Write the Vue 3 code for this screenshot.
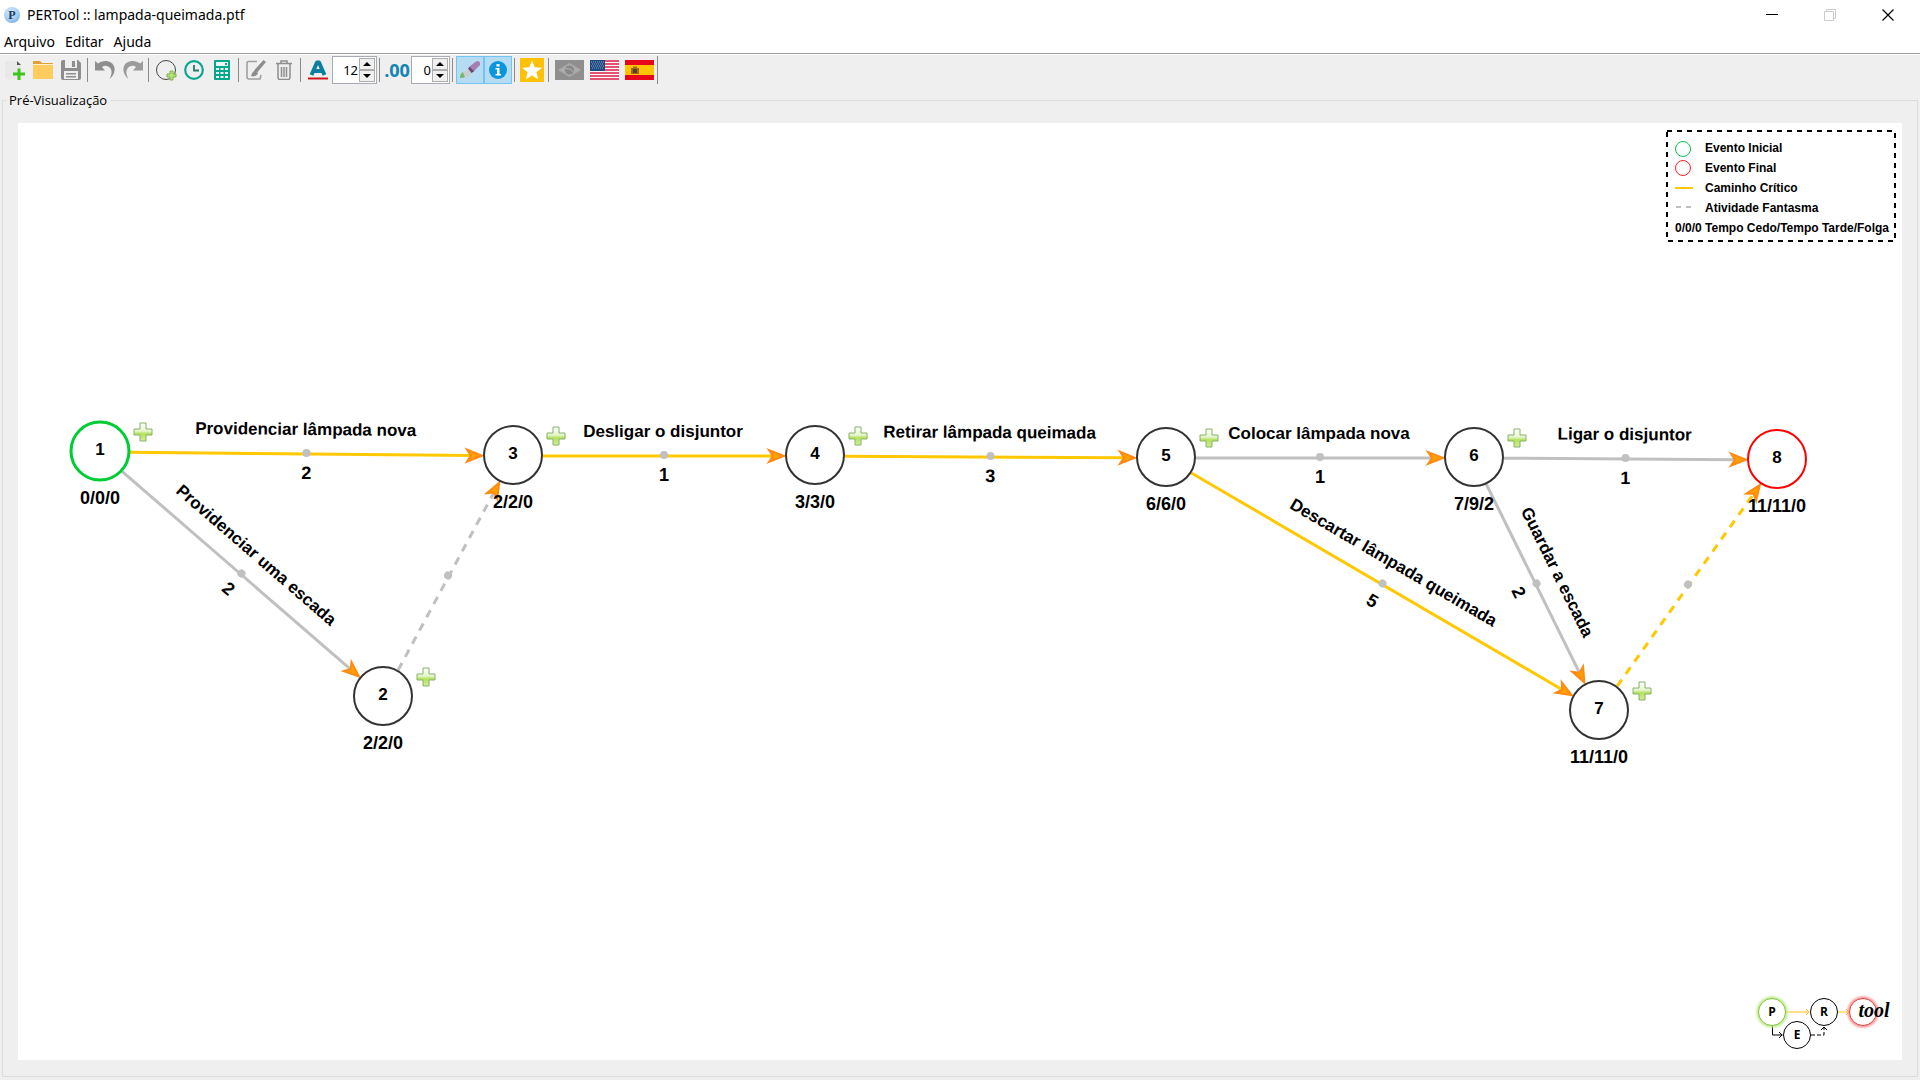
<script setup>
import { ref } from 'vue'

const fontSize = ref(12)
const decimals = ref(0)

const nodes = [
  { id: 1, x: 82, y: 328, time: '0/0/0', kind: 'start' },
  { id: 2, x: 365, y: 573, time: '2/2/0' },
  { id: 3, x: 495, y: 332, time: '2/2/0' },
  { id: 4, x: 797, y: 332, time: '3/3/0' },
  { id: 5, x: 1148, y: 334, time: '6/6/0' },
  { id: 6, x: 1456, y: 334, time: '7/9/2' },
  { id: 7, x: 1581, y: 587, time: '11/11/0' },
  { id: 8, x: 1759, y: 336, time: '11/11/0', kind: 'end' }
]

const activities = [
  { from: 1, to: 3, label: 'Providenciar lâmpada nova', duration: 2, critical: true },
  { from: 1, to: 2, label: 'Providenciar uma escada', duration: 2 },
  { from: 2, to: 3, ghost: true },
  { from: 3, to: 4, label: 'Desligar o disjuntor', duration: 1, critical: true },
  { from: 4, to: 5, label: 'Retirar lâmpada queimada', duration: 3, critical: true },
  { from: 5, to: 6, label: 'Colocar lâmpada nova', duration: 1 },
  { from: 5, to: 7, label: 'Descartar lâmpada queimada', duration: 5, critical: true },
  { from: 6, to: 7, label: 'Guardar a escada', duration: 2 },
  { from: 6, to: 8, label: 'Ligar o disjuntor', duration: 1 },
  { from: 7, to: 8, ghost: true, critical: true }
]

const RADIUS = 30

// Each edge is drawn along its own x axis, centred on the midpoint of its two nodes.
const edges = activities.map((a) => {
  const p = nodes.find((n) => n.id === a.from)
  const q = nodes.find((n) => n.id === a.to)
  const half = Math.hypot(q.x - p.x, q.y - p.y) / 2 - RADIUS
  const angle = (Math.atan2(q.y - p.y, q.x - p.x) * 180) / Math.PI
  return {
    ...a,
    key: `${a.from}-${a.to}`,
    half,
    frame: `translate(${(p.x + q.x) / 2} ${(p.y + q.y) / 2}) rotate(${angle})`
  }
})
</script>

<template>
  <div class="window">
    <header class="titlebar">
      <svg class="app-icon" viewBox="0 0 16 16" aria-hidden="true">
        <defs>
          <radialGradient id="ball" cx="0.4" cy="0.3" r="0.8">
            <stop offset="0" stop-color="#d4e9fa" />
            <stop offset="0.6" stop-color="#a5cdf0" />
            <stop offset="1" stop-color="#6fa8dc" />
          </radialGradient>
        </defs>
        <circle cx="8" cy="8" r="8" fill="url(#ball)" />
        <text x="8" y="12" class="app-letter">P</text>
      </svg>
      <h1 class="title">PERTool :: lampada-queimada.ptf</h1>
      <div class="controls">
        <button type="button" aria-label="Minimizar">
          <svg viewBox="0 0 12 12"><path d="M0 5.5h12" stroke="#000" /></svg>
        </button>
        <button type="button" aria-label="Restaurar" disabled>
          <svg viewBox="0 0 12 12"><path d="M.5 2.5h9v9h-9zM2.5 2.5v-2h9v9h-2" fill="none" stroke="#ccc" /></svg>
        </button>
        <button type="button" aria-label="Fechar">
          <svg viewBox="0 0 12 12"><path d="M.5.5l11 11M11.5.5l-11 11" stroke="#000" stroke-width="1.2" /></svg>
        </button>
      </div>
    </header>

    <nav class="menubar">
      <button type="button">Arquivo</button>
      <button type="button">Editar</button>
      <button type="button">Ajuda</button>
    </nav>

    <div class="toolbar">
      <button type="button" class="tool" aria-label="Novo">
        <svg width="20" height="20" viewBox="0 0 20 20">
          <path d="M0 1h12l4 4v14H0z" fill="#e9e9e9" />
          <path d="M12 1l4 4h-4z" fill="#555" />
          <path d="M12.500 8.500h3v4h4.500v3h-4.500V20h-3v-4.500H8v-3h4.500z" fill="#3fc41c" />
        </svg>
      </button>
      <button type="button" class="tool" aria-label="Abrir">
        <svg width="20" height="20" viewBox="0 0 20 20">
          <path d="M0 1h7l2 2h11v4H0z" fill="#e0a03c" />
          <path d="M0 5h20v14H0z" fill="#ffcd5f" />
          <path d="M0 4.500h20" stroke="#fff0cf" />
        </svg>
      </button>
      <button type="button" class="tool" aria-label="Salvar">
        <svg width="20" height="20" viewBox="0 0 20 20">
          <path d="M2 0h15l3 3v15a2 2 0 0 1-2 2H2a2 2 0 0 1-2-2V2a2 2 0 0 1 2-2z" fill="#8e8e8e" />
          <path d="M4 0h12v8H4zM3 11h14v8H3z" fill="#efefef" />
          <path d="M11 1h3v6h-3zM5 13h10v1.500H5zM5 16h10v1.500H5z" fill="#8e8e8e" />
        </svg>
      </button>
      <span class="sep"></span>
      <button type="button" class="tool" aria-label="Desfazer">
        <svg width="20" height="20" viewBox="0 0 20 20">
          <path d="M0 1l3 2.500C8-.5 18 0 19.500 8c.6 4.500-1.500 8-5 11 2-4 3-7.500 1-10.500C13.500 5.500 9.500 5 7 7l3 3.500H0z" fill="#8e8e8e" />
        </svg>
      </button>
      <button type="button" class="tool redo" aria-label="Refazer">
        <svg width="20" height="20" viewBox="0 0 20 20">
          <path d="M20 1l-3 2.500C12-.5 2 0 .5 8c-.6 4.500 1.500 8 5 11-2-4-3-7.500-1-10.500C6.500 5.500 10.500 5 13 7l-3 3.500h10z" fill="#9b9b9b" />
        </svg>
      </button>
      <span class="sep"></span>
      <button type="button" class="tool" aria-label="Novo evento">
        <svg width="22" height="22" viewBox="0 0 22 22">
          <circle cx="11" cy="11" r="9.500" fill="none" stroke="#444" />
          <path d="M15 12h3v3h3v3h-3v3h-3v-3h-3v-3h3z" fill="#b5e36f" stroke="#7fae52" />
        </svg>
      </button>
      <button type="button" class="tool" aria-label="Tempos">
        <svg width="20" height="20" viewBox="0 0 20 20">
          <circle cx="10" cy="10" r="8.800" fill="none" stroke="#0aa791" stroke-width="2.200" />
          <path d="M10 5v5.500h5" fill="none" stroke="#25786c" stroke-width="1.800" />
        </svg>
      </button>
      <button type="button" class="tool" aria-label="Calcular">
        <svg width="16" height="20" viewBox="0 0 16 20">
          <rect width="16" height="20" rx="1" fill="#06a68c" />
          <path d="M2 2h12v4H2z" fill="#e9f7f4" />
          <path d="M11 3h2v2h-2z" fill="#06a68c" />
          <path d="M2 8h3v2H2zM6.500 8h3v2h-3zM11 8h3v2h-3zM2 12h3v2H2zM6.500 12h3v2h-3zM11 12h3v2h-3zM2 16h3v2H2zM6.500 16h3v2h-3zM11 16h3v2h-3z" fill="#e9f7f4" />
        </svg>
      </button>
      <span class="sep"></span>
      <button type="button" class="tool" aria-label="Editar atividade">
        <svg width="20" height="20" viewBox="0 0 20 20">
          <path d="M11 1.500H2.500a1.500 1.500 0 0 0-1.500 1.500v14a2 2 0 0 0 2 2h11l1-4" fill="none" stroke="#a0a0a0" stroke-width="1.600" />
          <path d="M17.500 0L20 2l-8.500 10-4 3 1-5z" fill="#8c8c8c" />
          <path d="M5 16c1-3 2-5 4-5l3 2c-1 3-4 4-7 3z" fill="#8c8c8c" />
        </svg>
      </button>
      <button type="button" class="tool" aria-label="Excluir">
        <svg width="16" height="20" viewBox="0 0 16 20">
          <path d="M0 3.500h16M5 3V1h6v2M2 4v13.500a2 2 0 0 0 2 2h8a2 2 0 0 0 2-2V4M5.500 7v10M8 7v10M10.500 7v10" fill="none" stroke="#8e8e8e" stroke-width="1.500" />
        </svg>
      </button>
      <span class="sep"></span>
      <button type="button" class="tool" aria-label="Tamanho da fonte">
        <svg width="20" height="20" viewBox="0 0 20 20">
          <path d="M3.500 15L9 2.500h2L16.500 15M6 11h8" fill="none" stroke="#0d7f9e" stroke-width="4" stroke-linejoin="round" />
          <path d="M0 18.500h20" stroke="#d0161b" stroke-width="2" />
        </svg>
      </button>
      <div class="spin spin-wide">
        <input v-model="fontSize" type="text" aria-label="Tamanho da fonte" />
        <span class="steps">
          <button type="button" aria-label="Aumentar fonte" @click="fontSize++"><svg width="8" height="4" viewBox="0 0 8 4"><path d="M0 4l4-4 4 4z" /></svg></button>
          <button type="button" aria-label="Diminuir fonte" @click="fontSize--"><svg width="8" height="4" viewBox="0 0 8 4"><path d="M0 0l4 4 4-4z" /></svg></button>
        </span>
      </div>
      <span class="sep"></span>
      <button type="button" class="tool decimals">.00</button>
      <div class="spin">
        <input v-model="decimals" type="text" aria-label="Casas decimais" />
        <span class="steps">
          <button type="button" aria-label="Mais casas" @click="decimals++"><svg width="8" height="4" viewBox="0 0 8 4"><path d="M0 4l4-4 4 4z" /></svg></button>
          <button type="button" aria-label="Menos casas" @click="decimals--"><svg width="8" height="4" viewBox="0 0 8 4"><path d="M0 0l4 4 4-4z" /></svg></button>
        </span>
      </div>
      <span class="sep"></span>
      <button type="button" class="tool pressed" aria-label="Realçar caminho crítico" aria-pressed="true">
        <svg width="20" height="20" viewBox="0 0 20 20">
          <path d="M0 18c0-3 1-5 3-6l3 3c0 2-2 3-6 3z" fill="#6fb866" />
          <path d="M3 12.500l5-4 4 4-3 4-4 1z" fill="#c9cdd0" />
          <path d="M8 8.500l2-2 4.500 4.500-3 2z" fill="#6b4778" />
          <path d="M9.500 6.500l6.500-5c2.500-1 5 .5 4 3.500l-6 6z" fill="#a67db0" />
        </svg>
      </button>
      <button type="button" class="tool pressed" aria-label="Informações" aria-pressed="true">
        <svg width="18" height="18" viewBox="0 0 18 18">
          <circle cx="9" cy="9" r="9" fill="#0b95dc" />
          <path d="M7.500 3h3v2.500h-3zM6.500 7h4v6H12v1.500H6.500V13H8V8.500H6.500z" fill="#fff" />
        </svg>
      </button>
      <span class="sep"></span>
      <button type="button" class="tool" aria-label="Favoritos">
        <svg width="24" height="24" viewBox="0 0 24 24">
          <path d="M0 0h24v24H0z" fill="#ffc107" />
          <path d="M12 2.500l2.700 6.700 7.300.5-5.600 4.600 1.800 7-6.200-3.900-6.200 3.900 1.800-7L2 9.700l7.300-.5z" fill="#fff" />
        </svg>
      </button>
      <span class="sep"></span>
      <button type="button" class="tool flag" aria-label="Português" disabled>
        <svg width="29" height="20" viewBox="0 0 29 20">
          <path d="M0 0h29v20H0z" fill="#8f8f8f" />
          <path d="M14.500 3L26 10l-11.500 7L3 10z" fill="#ababab" />
          <circle cx="14.500" cy="10" r="4.500" fill="#878787" />
          <path d="M10.500 8.500q5-.5 8 3.500" fill="none" stroke="#b5b5b5" />
        </svg>
      </button>
      <button type="button" class="tool flag" aria-label="English">
        <svg width="29" height="20" viewBox="0 0 29 20">
          <path d="M0 0h29v20H0z" fill="#fff" />
          <path d="M0 1h29M0 4h29M0 7h29M0 10h29M0 13h29M0 16h29M0 19h29" stroke="#dc1c44" stroke-width="1.600" />
          <path d="M0 0h15v11H0z" fill="#1f4a80" />
          <path d="M1 2h13M2 4h12M1 6h13M2 8h12" stroke="#8ba4c4" stroke-dasharray="1 1" />
        </svg>
      </button>
      <button type="button" class="tool flag" aria-label="Español">
        <svg width="29" height="20" viewBox="0 0 29 20">
          <path d="M0 0h29v20H0z" fill="#e8061b" />
          <path d="M0 5h29v10H0z" fill="#ffc400" />
          <path d="M6 8h2V6.500h4V8h2v6H6z" fill="#a5651a" />
          <path d="M8 9h4v4H8z" fill="#5a3d2c" />
        </svg>
      </button>
      <span class="sep sep-end"></span>
    </div>

    <fieldset class="preview">
      <legend>Pré-Visualização</legend>
      <main class="canvas">
        <svg class="diagram" viewBox="0 0 1884 937" role="img" aria-label="Diagrama PERT">
          <defs>
            <linearGradient id="plus" x1="0" y1="0" x2="0" y2="1">
              <stop offset="0" stop-color="#fff" />
              <stop offset="0.45" stop-color="#e6f5cd" />
              <stop offset="0.6" stop-color="#b4e05c" />
              <stop offset="1" stop-color="#d3ee9a" />
            </linearGradient>
          </defs>

          <g v-for="e in edges" :key="e.key" :transform="e.frame">
            <line :x1="-e.half" :x2="e.half - 10" y1="1" y2="1" class="edge" :class="{ critical: e.critical, ghost: e.ghost }" />
            <path class="arrow" :transform="`translate(${e.half} 1)`" d="M-1 0L-16-6-12 0-16 6z" />
            <circle r="4" class="handle" />
            <text v-if="e.label" x="-1" y="-18" class="label">{{ e.label }}</text>
            <text v-if="e.duration" y="26" class="time">{{ e.duration }}</text>
          </g>

          <g v-for="n in nodes" :key="n.id" :transform="`translate(${n.x} ${n.y})`">
            <circle r="29" class="node" :class="n.kind" />
            <text y="4" class="label">{{ n.id }}</text>
            <text y="53" class="time">{{ n.time }}</text>
            <path v-if="n.kind !== 'end'" transform="translate(43 -19)" class="plus" d="M-3-9H3V-3H9V3H3V9H-3V3H-9V-3H-3z" />
          </g>
        </svg>

        <aside class="key">
          <svg class="key-frame" aria-hidden="true">
            <rect x="1" y="1" width="228" height="110" />
          </svg>
          <ul>
            <li><svg width="18" height="18"><circle cx="8" cy="10" r="7.500" fill="none" stroke="#00c853" /></svg>Evento Inicial</li>
            <li><svg width="18" height="18"><circle cx="8" cy="9" r="7.500" fill="none" stroke="#f22" /></svg>Evento Final</li>
            <li><svg width="18" height="18"><path d="M0 9h18" stroke="#ffc800" stroke-width="2" /></svg>Caminho Crítico</li>
            <li><svg width="18" height="18"><path d="M1 8h15" stroke="#c0c0c0" stroke-width="2" stroke-dasharray="5 5" /></svg>Atividade Fantasma</li>
            <li>0/0/0 Tempo Cedo/Tempo Tarde/Folga</li>
          </ul>
        </aside>

        <svg class="logo" width="140" height="60" viewBox="0 0 140 60" role="img" aria-label="PERTool">
          <defs>
            <filter id="glow" x="-30%" y="-30%" width="160%" height="160%">
              <feGaussianBlur stdDeviation="1.200" />
            </filter>
          </defs>
          <path d="M36 20h23M56 17l3 3-3 3M87 20h12M96 17l3 3-3 3" class="gold" />
          <path d="M22.500 34v9h10M29 40l3 3-3 3" class="ink" />
          <path d="M61 43h13v-7" class="ink" stroke-dasharray="4 2" />
          <path d="M71 38l3-3 3 3" class="ink" />
          <circle cx="22" cy="20" r="14" fill="none" stroke="#bdea86" stroke-width="3" filter="url(#glow)" />
          <circle cx="22" cy="20" r="13.500" fill="#fff" stroke="#86c440" />
          <circle cx="74" cy="20" r="13.500" class="ring" />
          <circle cx="47" cy="43" r="13.500" class="ring" />
          <circle cx="113" cy="20" r="14" fill="none" stroke="#ff8f8f" stroke-width="3" filter="url(#glow)" />
          <circle cx="113" cy="20" r="13.500" fill="#fff" stroke="#e04444" />
          <text x="22" y="24">P</text>
          <text x="74" y="24">R</text>
          <text x="47" y="47">E</text>
          <text x="124" y="25" class="script">tool</text>
        </svg>
      </main>
    </fieldset>
  </div>
</template>

<style>
body {
  background: #efefef;
}
</style>

<style scoped>
.window {
  display: flex;
  flex-direction: column;
  min-height: 100vh;
  box-sizing: border-box;
  padding-bottom: 3px;
  font: 13px/16px "Noto Sans", "Open Sans", sans-serif;
  color: #000;
}
button {
  border: 0;
  padding: 0;
  background: none;
  font: inherit;
  color: inherit;
}
svg {
  display: block;
}

.titlebar {
  display: flex;
  align-items: center;
  height: 30px;
  padding: 0 3px 0 4px;
  background: #fff;
}
.app-icon {
  width: 16px;
  height: 16px;
}
.app-letter {
  font: bold 12px "Liberation Serif", serif;
  fill: #173a66;
  text-anchor: middle;
}
.title {
  margin: 0 0 0 7px;
  font-size: 14px;
  font-weight: 400;
}
.controls {
  display: flex;
  align-self: stretch;
  margin-left: auto;
}
.controls button {
  display: grid;
  place-items: center;
  width: 58px;
}
.controls svg {
  width: 12px;
  height: 12px;
}

.menubar {
  display: flex;
  gap: 10px;
  height: 23px;
  padding: 0 4px;
  background: #fff;
  border-bottom: 1px solid #a0a0a0;
  box-shadow: 0 1px #fff;
  font-size: 14px;
}

.toolbar {
  display: flex;
  align-items: center;
  height: 30px;
  padding: 1px 0 0 1px;
}
.tool {
  display: grid;
  place-items: center;
  box-sizing: border-box;
  width: 28px;
  height: 28px;
}
.redo {
  width: 27px;
}
.flag {
  width: 35px;
}
.pressed {
  background: #b6dcf3;
  border: 1px solid #73c3f5;
}
.decimals {
  font: bold 18px "Open Sans", "Noto Sans", sans-serif;
  color: #1583b4;
}
.sep {
  box-sizing: border-box;
  width: 6px;
  height: 24px;
  background: linear-gradient(#8a8a8a, #8a8a8a) 2px 0 / 1px 100% no-repeat;
}
.sep-end {
  height: 28px;
  background-position-x: 0;
}
.spin {
  display: flex;
  box-sizing: border-box;
  width: 39px;
  height: 28px;
  padding: 1px;
  border: 1px solid #a7abb3;
  background: #fff;
}
.spin-wide {
  width: 45px;
}
.spin input {
  flex: 1;
  min-width: 0;
  padding: 0 1px 0 0;
  border: 0;
  background: none;
  font: inherit;
  text-align: right;
}
.steps {
  display: flex;
  flex-direction: column;
  width: 16px;
}
.steps button {
  display: grid;
  flex: 1;
  place-items: center;
  border: 1px solid #adadad;
  background: #f0f0f0;
}

.preview {
  display: flex;
  flex: 1;
  flex-direction: column;
  min-width: 0;
  margin: 7px 2px 0;
  padding: 15px;
  border: 1px solid #dcdcdc;
}
.preview legend {
  margin-left: -12px;
  padding: 0 3px;
  font-family: "Open Sans", "Noto Sans", sans-serif;
}
.canvas {
  position: relative;
  background: #fff;
}
.diagram {
  width: 100%;
  height: auto;
}
.edge {
  stroke: #c0c0c0;
  stroke-width: 3;
}
.edge.critical {
  stroke: #ffc800;
}
.edge.ghost {
  stroke-dasharray: 8 7;
}
.arrow {
  fill: #ffa000;
  stroke: #ff8a14;
  stroke-width: 2;
}
.handle {
  fill: #c0c0c0;
}
.label,
.time {
  font: bold 17px "Liberation Sans", Arial, sans-serif;
  text-anchor: middle;
}
.time {
  font-size: 18px;
}
.node {
  fill: #fff;
  stroke: #333;
  stroke-width: 2;
}
.node.start {
  stroke: #00cc33;
  stroke-width: 3;
}
.node.end {
  stroke: #f00;
}
.plus {
  fill: url(#plus);
  stroke: #84b266;
}

.key {
  position: absolute;
  top: 7px;
  right: 6px;
  width: 230px;
  height: 112px;
  font: bold 12px/20px "Liberation Sans", Arial, sans-serif;
}
.key-frame {
  position: absolute;
  width: 100%;
  height: 100%;
}
.key-frame rect {
  fill: none;
  stroke: #000;
  stroke-width: 2;
  stroke-dasharray: 5 5;
}
.key ul {
  margin: 0;
  padding: 8px 0 0 9px;
  list-style: none;
}
.key li {
  display: flex;
  align-items: center;
  gap: 12px;
  height: 20px;
  white-space: nowrap;
}

.logo {
  position: absolute;
  right: 12px;
  bottom: 8px;
}
.logo text {
  font: bold 12px "Open Sans", "Noto Sans", sans-serif;
  text-anchor: middle;
}
.logo .script {
  font: italic bold 20px "Liberation Serif", serif;
}
.gold,
.ink {
  fill: none;
  stroke: #ffc21a;
}
.ink {
  stroke: #000;
}
.ring {
  fill: #fff;
  stroke: #000;
}
</style>
